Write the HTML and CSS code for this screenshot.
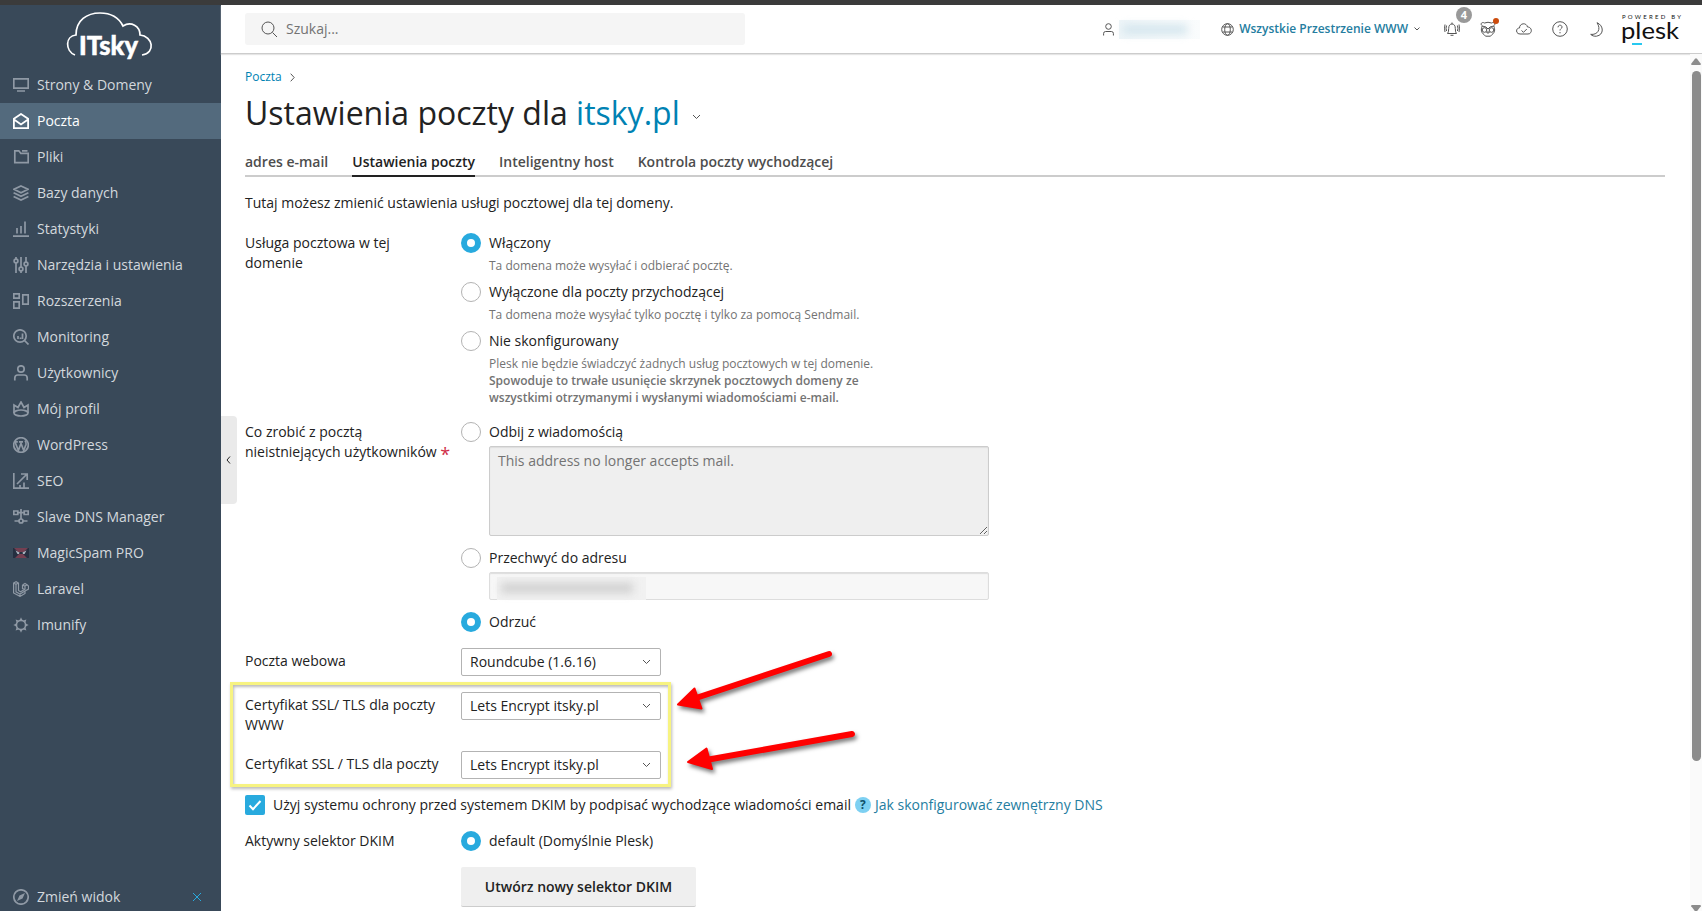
FILE: index.html
```
<!DOCTYPE html>
<html lang="pl">
<head>
<meta charset="UTF-8">
<meta name="viewport" content="width=device-width, initial-scale=1.0">
<title>Ustawienia poczty dla itsky.pl</title>
<link rel="stylesheet" href="styles.css">
</head>
<body>

<div class="page">
  <aside class="sidebar">
    <div class="logo">
      <svg width="88" height="50" viewBox="0 0 88 50">
        <path d="M9 44C-1 40-1 25 10 24C10 9 21 2 34 2C45 2 53 7 57 15C65 10 74 15 74 24C87 25 90 42 76 44" fill="none" stroke="#fff" stroke-width="1.7"/>
        <text x="13" y="43.5" textLength="59" lengthAdjust="spacingAndGlyphs">ITsky</text>
      </svg>
    </div>
    <nav class="menu">
      <a class="item" href="#"><svg class="ico" viewBox="0 0 16 16"><path d="M.8 1.8h14.4v9.4H.8zM4 14h8"/></svg>Strony &amp; Domeny</a>
      <a class="item active" href="#"><svg class="ico" viewBox="0 0 16 16"><path d="M.9 5.8L8 1l7.100 4.800v9.300H.9zM1 6.500l7 5 7-5"/></svg>Poczta</a>
      <a class="item" href="#"><svg class="ico" viewBox="0 0 16 16"><path d="M1.800 1.800h4l2 2.500h7.400v9.400H1.800zM9 1.800h5.500"/></svg>Pliki</a>
      <a class="item" href="#"><svg class="ico" viewBox="0 0 16 16"><path d="M8 1l7 3.300-7 3.400-7-3.400zM.6 7.700L8 11.300l7.400-3.600M.6 11.400L8 15l7.400-3.600"/></svg>Bazy danych</a>
      <a class="item" href="#"><svg class="ico" viewBox="0 0 16 16"><path d="M0 15.200h16M4 7v5.500M8 5v7.500M12 .5v12"/></svg>Statystyki</a>
      <a class="item" href="#"><svg class="ico" viewBox="0 0 16 16"><path d="M3 0v2.200M3 6v10M8 0v10M8 14v2M13 0v5M13 9v7"/><circle cx="3" cy="4" r="1.900"/><circle cx="8" cy="12" r="1.900"/><circle cx="13" cy="7" r="1.900"/></svg>Narzędzia i ustawienia</a>
      <a class="item" href="#"><svg class="ico" viewBox="0 0 16 16"><path d="M.8.8h5.400v4.400H.8zM.8 8.800h5.400v6.400H.8zM9.800 1.800h5.400v9.400H9.800z"/></svg>Rozszerzenia</a>
      <a class="item" href="#"><svg class="ico" viewBox="0 0 16 16"><circle cx="7" cy="7" r="6.200"/><path d="M11.500 11.500l4 4M5 7v3M7.500 8.500V10M9.500 4.500V10"/></svg>Monitoring</a>
      <a class="item" href="#"><svg class="ico" viewBox="0 0 16 16"><circle cx="8" cy="4" r="3.200"/><path d="M1.800 15.500v-2.500q0-3 3-3h6.400q3 0 3 3v2.500"/></svg>Użytkownicy</a>
      <a class="item" href="#"><svg class="ico" viewBox="0 0 16 16"><path d="M1 12V4l4 2.500L8 1l3 5.500L15 4v8"/><ellipse cx="8" cy="12" rx="7" ry="3"/></svg>Mój profil</a>
      <a class="item" href="#"><svg class="ico" viewBox="0 0 16 16"><circle cx="8" cy="8" r="7.300"/><path d="M2 5l3.400 8.500L8 6.500l2.700 7L13 7.500q.6-2-1-4M1.800 4.800h3M6 4.800h4"/></svg>WordPress</a>
      <a class="item" href="#"><svg class="ico" viewBox="0 0 16 16"><path d="M.8 0v15.200H16M4 11l9.500-9.500M8 1h6.200v6M7 15v-3M11 15V9.500"/></svg>SEO</a>
      <a class="item" href="#"><svg class="ico" viewBox="0 0 16 16"><path d="M.8 2h4v3.500h-4zM11.200 2h4v3.500h-4zM5 3.700h6M8 0v10M1.500 12H6M10 12h4.500"/><circle cx="8" cy="12" r="2"/></svg>Slave DNS Manager</a>
      <a class="item" href="#"><svg class="ico spam" viewBox="0 0 16 16"><path class="bg" d="M0 3h16v10H0z"/><path class="red" d="M1 3h14l-4 4H5zM2 13l4-4h4l4 4z"/><path class="eye" d="M2.500 5.500l4 2-.5 1.500H4.500zM13.500 5.500l-4 2 .5 1.500h1.500z"/></svg>MagicSpam PRO</a>
      <a class="item" href="#"><svg class="ico thin" viewBox="0 0 16 16"><path d="M.6 2l2.500-1.300L5.500 2v7.500l2 1.200 4.500-2.500V5l2-1.300L15.500 5v3L12 10v2.500L7 15.400.6 12zM.6 2L3 3.300 5.500 2M3 3.300v7.500l4 2.200 5-3M7 13v2.400M9.500 4L12 5.300M9.500 4v3.500L12 8.500M9.500 4L12 2.500 14 3.700"/></svg>Laravel</a>
      <a class="item" href="#"><svg class="ico" viewBox="0 0 16 16"><circle cx="8" cy="8" r="4.600"/><path class="solid" d="M6.500 3.500L8 .3l1.500 3.200zM6.500 12.500L8 15.700l1.500-3.200zM3.500 6.500L.3 8l3.200 1.500zM12.500 6.500L15.700 8l-3.200 1.500zM3.600 5.600l-1-3 3 1zM12.400 5.600l1-3-3 1zM3.600 10.400l-1 3 3-1zM12.400 10.400l1 3-3-1z"/></svg>Imunify</a>
    </nav>
    <div class="change-view">
      <svg class="ico" viewBox="0 0 16 16"><circle cx="8" cy="8" r="7.200"/><path class="solid" d="M12 4L9.500 9.500 4 12l2.500-5.500z"/></svg>
      <span>Zmień widok</span>
      <svg class="close" width="10" height="10" viewBox="0 0 10 10"><path d="M1 1l8 8M9 1L1 9"/></svg>
    </div>
  </aside>

  <div class="main">
    <header class="header">
      <div class="search">
        <svg width="17" height="17" viewBox="0 0 17 17"><circle cx="7" cy="7" r="6"/><path d="M11.500 11.500L16 16"/></svg>
        <span>Szukaj...</span>
      </div>
      <div class="tools">
        <svg class="user" width="11" height="13" viewBox="0 0 11 13"><circle cx="5.500" cy="3.500" r="2.800"/><path d="M.6 12.500v-2q0-2 2-2h5.800q2 0 2 2v2"/></svg>
        <span class="user-name"><i></i></span>
        <svg class="globe" width="13" height="13" viewBox="0 0 13 13"><circle cx="6.500" cy="6.500" r="5.800"/><ellipse cx="6.500" cy="6.500" rx="2.800" ry="5.800"/><path d="M1.500 4h10M1.500 9h10"/></svg>
        <a class="spaces" href="#">Wszystkie Przestrzenie WWW</a>
        <svg class="chev" width="6" height="4" viewBox="0 0 6 4"><path d="M.5.500L3 3 5.500.500"/></svg>
        <span class="tool bell">
          <svg width="16" height="14" viewBox="0 0 16 14"><path d="M3.500 11.500q1.200-1 1.200-5C4.700 3.500 6 2 8 2s3.300 1.500 3.300 4.500q0 4 1.200 5zM8 .5V2M6.500 13.300h3M2.600 3.500q-1.200 2.800 0 5.500M13.400 3.500q1.200 2.800 0 5.500M1 2.500q-1 3.800 0 7.500M15 2.500q1 3.800 0 7.500"/></svg>
          <b class="count">4</b>
        </span>
        <span class="tool bear">
          <svg width="16" height="16" viewBox="0 0 16 16"><path d="M2.500 5C-.5 3 2 .5 4.500 2q3.500-1.500 7 0c2.500-1.500 5 1 2 3M2.200 5C.5 9 1.500 12 4 13.500l1.500 1.700h5l1.500-1.700c2.500-1.500 3.500-4.500 1.800-8.500L10 6 8 8 6 6z"/><circle cx="4.500" cy="9" r="2.300"/><circle cx="11.500" cy="9" r="2.300"/><path d="M6.500 11h3L8 12.500z"/></svg>
          <i class="dot"></i>
        </span>
        <svg class="cloud" width="16" height="12" viewBox="0 0 16 12"><path d="M4 11C-.5 11-.5 5 3.500 5 3.500 0 10.500-.8 11.500 4c5 0 5 7 .5 7zM5.500 7.500l2 1.800 3.300-3.300"/></svg>
        <svg class="help" width="16" height="16" viewBox="0 0 16 16"><circle cx="8" cy="8" r="7.300"/><path d="M6 6.300C6 3.500 10.200 3.600 10 6.200 9.900 7.500 8 7.800 8 9.500M8 11v1.300"/></svg>
        <svg class="moon" width="13" height="15" viewBox="0 0 13 15"><path d="M7 .7C14 3.500 14.200 13 6.500 14.200c-2.300.3-4.500-.5-5.800-1.800C7.500 13 11.500 7.500 7 .7z"/></svg>
        <span class="plesk">
          <svg width="60" height="34" viewBox="0 0 60 34">
            <text class="powered" x="0" y="6.500" textLength="59">POWERED BY</text>
            <text x="-1" y="27" textLength="58" lengthAdjust="spacingAndGlyphs">plesk</text>
            <path d="M10 31h10v2H10z"/>
          </svg>
        </span>
      </div>
    </header>

    <div class="collapse"><svg width="5" height="8" viewBox="0 0 5 8"><path d="M4 .5L1 4l3 3.500"/></svg></div>

    <div class="content">
      <div class="breadcrumb"><a href="#">Poczta</a><svg width="5" height="9" viewBox="0 0 5 9"><path d="M.7.700L4.200 4.500.7 8.300"/></svg></div>
      <h1>Ustawienia poczty dla <a href="#">itsky.pl</a><svg width="9" height="6" viewBox="0 0 9 6"><path d="M1 1l3.500 3.500L8 1"/></svg></h1>
      <div class="tabs">
        <a href="#">adres e-mail</a>
        <a href="#" class="current">Ustawienia poczty</a>
        <a href="#">Inteligentny host</a>
        <a href="#">Kontrola poczty wychodzącej</a>
      </div>
      <p class="intro">Tutaj możesz zmienić ustawienia usługi pocztowej dla tej domeny.</p>

      <div class="form">
        <div class="row">
          <div class="label">Usługa pocztowa w tej domenie</div>
          <div class="field">
            <label class="radio checked">Włączony</label>
            <div class="hint">Ta domena może wysyłać i odbierać pocztę.</div>
            <label class="radio">Wyłączone dla poczty przychodzącej</label>
            <div class="hint">Ta domena może wysyłać tylko pocztę i tylko za pomocą Sendmail.</div>
            <label class="radio">Nie skonfigurowany</label>
            <div class="hint">Plesk nie będzie świadczyć żadnych usług pocztowych w tej domenie.<br><b>Spowoduje to trwałe usunięcie skrzynek pocztowych domeny ze<br>wszystkimi otrzymanymi i wysłanymi wiadomościami e-mail.</b></div>
          </div>
        </div>

        <div class="row">
          <div class="label">Co zrobić z pocztą<br><span class="nowrap">nieistniejących użytkowników <span class="required">*</span></span></div>
          <div class="field">
            <label class="radio">Odbij z wiadomością</label>
            <textarea disabled>This address no longer accepts mail.</textarea>
            <label class="radio">Przechwyć do adresu</label>
            <div class="input"><span class="masked"><i></i></span></div>
            <label class="radio checked">Odrzuć</label>
          </div>
        </div>

        <div class="row select-row">
          <div class="label">Poczta webowa</div>
          <div class="select">Roundcube (1.6.16)<svg width="9" height="6" viewBox="0 0 9 6"><path d="M1 1l3.500 3.500L8 1"/></svg></div>
        </div>

        <div class="certs">
          <div class="row select-row">
            <div class="label">Certyfikat SSL/ TLS dla poczty WWW</div>
            <div class="select">Lets Encrypt itsky.pl<svg width="9" height="6" viewBox="0 0 9 6"><path d="M1 1l3.500 3.500L8 1"/></svg></div>
          </div>
          <div class="row select-row">
            <div class="label">Certyfikat SSL / TLS dla poczty</div>
            <div class="select">Lets Encrypt itsky.pl<svg width="9" height="6" viewBox="0 0 9 6"><path d="M1 1l3.500 3.500L8 1"/></svg></div>
          </div>
          <div class="highlight"></div>
          <svg class="arrows" width="190" height="136" viewBox="0 0 190 136">
            <path class="line" d="M158 13L25 57M181 93L35 119"/>
            <path class="head" d="M7 63.500L23.500 47.500 30.500 67.500zM17 121L35.500 107.500 41 128z"/>
          </svg>
        </div>

        <div class="dkim">
          <span class="checkbox"><svg width="14" height="11" viewBox="0 0 14 11"><path d="M1.500 5.500L5 9.200 12.500 1"/></svg></span>
          <span>Użyj systemu ochrony przed systemem DKIM by podpisać wychodzące wiadomości email</span>
          <b class="question">?</b>
          <a href="#">Jak skonfigurować zewnętrzny DNS</a>
        </div>

        <div class="row">
          <div class="label">Aktywny selektor DKIM</div>
          <div class="field">
            <label class="radio checked">default (Domyślnie Plesk)</label>
            <button class="btn">Utwórz nowy selektor DKIM</button>
          </div>
        </div>
      </div>
    </div>

    <div class="scrollbar">
      <svg width="10" height="7" viewBox="0 0 10 7"><path d="M4 .8q1-1.200 2 0l3.800 5q.3 1.200-.8 1.200H1Q-.1 7 .2 5.800z"/></svg>
      <div class="thumb"></div>
      <svg width="10" height="7" viewBox="0 0 10 7"><path d="M4 6.200q1 1.200 2 0l3.800-5Q10.100 0 9 0H1Q-.1 0 .2 1.200z"/></svg>
    </div>
  </div>
</div>

</body>
</html>
```
FILE: styles.css
```
*,
*::before {
  box-sizing: border-box;
}
body {
  margin: 0;
  font-family: "Open Sans", "Noto Sans", sans-serif;
  font-size: 14px;
  line-height: 20px;
  color: #222;
  background: #fff;
}
a {
  color: #0082b3;
  text-decoration: none;
}
svg {
  fill: none;
  stroke: #555;
  flex: none;
}
.page {
  display: flex;
  height: 911px;
  border-top: 5px solid #3b3b3b;
  overflow: hidden;
}

/* sidebar */
.sidebar {
  width: 221px;
  flex: none;
  display: flex;
  flex-direction: column;
  background: #394959;
}
.logo {
  height: 62px;
  padding: 6px 0 0 66px;
}
.logo text {
  font: 900 26px Lato, sans-serif;
  fill: #fff;
  stroke: #fff;
  stroke-width: .5;
}
.item {
  display: flex;
  align-items: center;
  height: 36px;
  padding-left: 13px;
  gap: 8px;
  color: #d3d8dd;
  font-weight: 500;
}
.item.active {
  background: #536a7d;
  color: #fff;
}
.ico {
  width: 16px;
  height: 16px;
  stroke: #8f99a5;
  stroke-width: 1.7;
}
.ico.thin {
  stroke-width: 1.2;
}
.ico .solid {
  fill: #8f99a5;
  stroke: none;
}
.active .ico {
  stroke: #fff;
  stroke-width: 1.8;
}
.ico.spam {
  stroke: none;
}
.spam .bg {
  fill: #252f40;
}
.spam .red {
  fill: #743f51;
}
.spam .eye {
  fill: #aab4bf;
}
.change-view {
  display: flex;
  align-items: center;
  gap: 8px;
  height: 36px;
  margin: auto 0 -4px;
  padding: 0 19px 0 13px;
  color: #d3d8dd;
  font-weight: 500;
}
.close {
  margin-left: auto;
  stroke: #28aade;
}

/* header */
.main {
  position: relative;
  flex: 1;
  display: grid;
  grid-template: 49px 1fr / 1fr 12px;
}
.header {
  grid-column: 1 / 3;
  display: flex;
  justify-content: space-between;
  border-bottom: 1px solid #ccc;
  box-shadow: 0 1px 1px #e5e5e5;
  padding: 8px 20px 0 24px;
}
.search {
  display: flex;
  align-items: center;
  gap: 8px;
  width: 500px;
  height: 32px;
  padding-left: 16px;
  border-radius: 3px;
  background: #f5f5f5;
  color: #737373;
}
.tools {
  display: flex;
  align-items: center;
  height: 32px;
}
.user-name {
  width: 81px;
  height: 19px;
  margin: 0 21px 0 5px;
  padding: 5px 13px 5px 4px;
  background: linear-gradient(90deg, #eef5f8, #fafcfd);
}
.user-name i {
  display: block;
  height: 9px;
  background: #d3e5ed;
  filter: blur(4px);
}
.spaces {
  margin: 0 6px 0 5px;
  color: #257da0;
  font-size: 12px;
  font-weight: 600;
}
.tool {
  position: relative;
  display: flex;
}
.bell {
  margin-left: 24px;
}
.bear {
  margin-left: 20px;
}
.cloud {
  margin-left: 20px;
}
.help {
  margin-left: 20px;
}
.moon {
  margin-left: 22px;
}
.count {
  position: absolute;
  left: 12px;
  top: -15px;
  width: 16px;
  height: 16px;
  border-radius: 8px;
  background: #999;
  color: #fff;
  font-size: 11px;
  line-height: 16px;
  text-align: center;
}
.dot {
  position: absolute;
  left: 13px;
  top: -3px;
  width: 6px;
  height: 6px;
  border-radius: 3px;
  background: #cc4b0b;
}
.plesk {
  width: 60px;
  height: 34px;
  margin-left: 19px;
}
.plesk svg {
  display: block;
  stroke: none;
  overflow: visible;
}
.plesk text {
  font: 24px Lato, sans-serif;
  fill: #111;
}
.plesk .powered {
  font: 6px Lato, sans-serif;
}
.plesk path {
  fill: #28c8f0;
}

/* content */
.collapse {
  position: absolute;
  left: 0;
  top: 411px;
  display: flex;
  align-items: center;
  justify-content: center;
  width: 16px;
  height: 88px;
  padding-right: 2px;
  border-radius: 0 4px 4px 0;
  background: #eaeaea;
}
.collapse svg {
  stroke: #222;
}
.content {
  min-width: 0;
  padding: 14px 25px 0 24px;
  overflow: hidden;
}
.breadcrumb {
  display: flex;
  align-items: center;
  gap: 8px;
  height: 18px;
  font-size: 12px;
}
h1 {
  display: flex;
  align-items: center;
  margin: 7px 0 0;
  font-size: 32px;
  line-height: 40px;
  font-weight: 400;
  white-space: pre;
}
h1 svg {
  margin: 7px 0 0 12px;
}
.tabs {
  display: flex;
  gap: 24px;
  height: 36px;
  margin-top: 8px;
  padding-top: 9px;
  border-bottom: 2px solid #ccc;
}
.tabs a {
  height: 27px;
  padding-top: 2px;
  color: #4d4d4d;
  font-weight: 600;
}
.tabs .current {
  color: #222;
  border-bottom: 2px solid #222;
}
.intro {
  margin: 16px 0 20px;
}
.form {
  display: flex;
  flex-direction: column;
  gap: 16px;
}
.row {
  display: grid;
  grid-template-columns: 204px 528px;
  column-gap: 12px;
}
.select-row .label {
  padding-top: 3px;
}
.nowrap {
  white-space: nowrap;
}
.required {
  color: #d02d48;
  font-size: 18px;
  line-height: 1px;
  vertical-align: -4px;
}
.radio {
  display: flex;
  align-items: center;
  gap: 8px;
}
.radio::before {
  content: "";
  width: 20px;
  height: 20px;
  border: 1px solid #b3b3b3;
  border-radius: 50%;
}
.radio.checked::before {
  border: 6px solid #28aade;
}
.hint {
  margin: 4px 0 8px 28px;
  color: #737373;
  font-size: 12px;
  line-height: 17px;
}
.hint:last-child {
  margin-bottom: 0;
}
.hint b {
  font-weight: 600;
}
textarea,
.input {
  display: block;
  width: 500px;
  margin: 4px 0 12px 28px;
  border: 1px solid #ccc;
  border-radius: 2px;
  box-shadow: inset 0 1px 1px #ddd;
}
textarea {
  height: 90px;
  padding: 4px 8px;
  font: inherit;
  color: #737373;
  background: #efefef;
}
.input {
  height: 28px;
  padding: 4px 7px 0;
  border-color: #ddd;
  background: #f7f7f7;
}
.masked {
  display: block;
  width: 149px;
  height: 23px;
  padding: 6px 13px 7px 4px;
  background: #f1f1f1;
}
.masked i {
  display: block;
  height: 10px;
  background: #d0d0d0;
  filter: blur(4px);
}
.select {
  display: flex;
  align-items: center;
  justify-content: space-between;
  width: 200px;
  height: 28px;
  padding: 0 9px 0 8px;
  border: 1px solid #b3b3b3;
  border-radius: 2px;
}

/* certificate rows with the markers over them */
.certs {
  position: relative;
  display: flex;
  flex-direction: column;
  gap: 16px;
}
.highlight {
  position: absolute;
  left: -15px;
  top: -10px;
  width: 441px;
  height: 105px;
  border: 3px solid #f7f381;
  box-shadow: 1px 2px 3px #bbb, inset 1px 2px 3px #bbb;
}
.arrows {
  position: absolute;
  left: 426px;
  top: -51px;
  filter: drop-shadow(2px 3px 2px #777);
}
.arrows .line {
  stroke: #f00;
  stroke-width: 6;
  stroke-linecap: round;
}
.arrows .head {
  fill: #f00;
  stroke: #f00;
  stroke-width: 2;
  stroke-linejoin: round;
}
.dkim {
  display: flex;
  align-items: center;
  height: 20px;
}
.dkim a {
  color: #257da0;
}
.checkbox {
  display: flex;
  align-items: center;
  justify-content: center;
  width: 20px;
  height: 20px;
  margin-right: 8px;
  border-radius: 2px;
  background: #28aade;
}
.checkbox path {
  stroke: #fff;
  stroke-width: 2;
}
.question {
  width: 16px;
  height: 16px;
  margin: 0 4px;
  border-radius: 8px;
  background: #7dd0f2;
  color: #10506b;
  font-size: 12px;
  line-height: 16px;
  text-align: center;
}
.btn {
  display: block;
  width: 235px;
  height: 40px;
  margin-top: 16px;
  border: 0;
  border-bottom: 1px solid #ccc;
  border-radius: 2px;
  background: #efefef;
  color: #222;
  font: 600 14px/20px "Open Sans", sans-serif;
}

.scrollbar {
  display: flex;
  flex-direction: column;
  align-items: center;
  padding-top: 4px;
  background: #fafafa;
}
.scrollbar svg {
  fill: #8b8b8b;
  stroke: none;
}
.thumb {
  width: 9px;
  height: 690px;
  margin: 6px 0 144px;
  border-radius: 5px;
  background: #8b8b8b;
}
```
